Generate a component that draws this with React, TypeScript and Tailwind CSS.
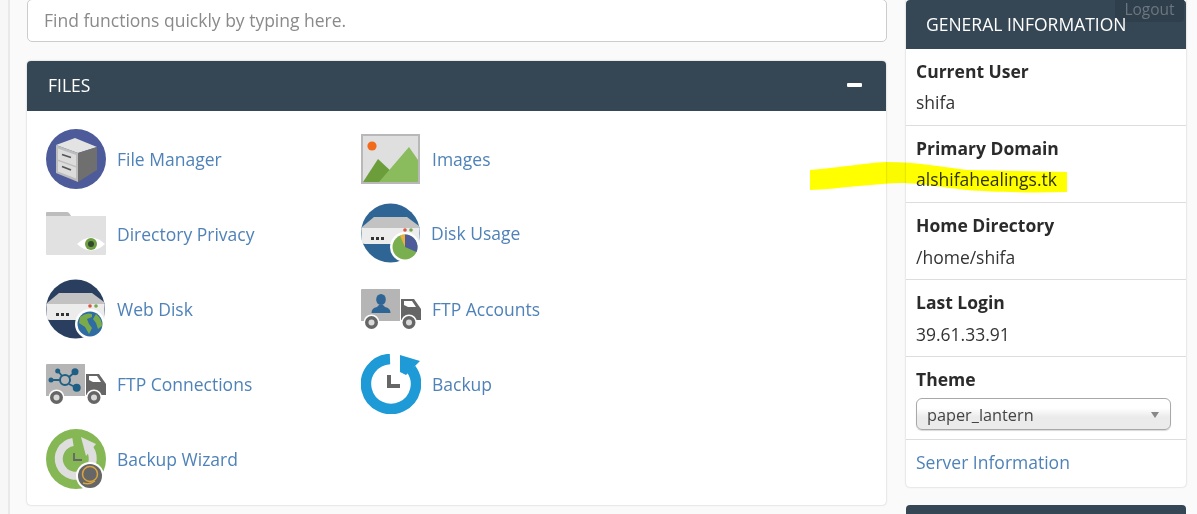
import React from "react";

const FileManagerIcon = () => (
  <svg width="60" height="60" viewBox="0 0 60 60">
    <circle cx="30" cy="30" r="30" fill="#4d5b9a" />
    <path d="M10 16 L29 9 L51 18 L32 24 Z" fill="#e3e3e3" />
    <path d="M32 24 L51 18 L51 41 L32 53 Z" fill="#6f6f6f" />
    <path d="M10 16 L32 24 L32 53 L10 44 Z" fill="#bdbdbd" />
    <path d="M12 19.5 L30 26 L30 37 L12 30.5 Z M12 32 L30 38.5 L30 49.5 L12 42.5 Z" fill="#dcdcdc" />
    <path d="M16 25.5 L25 28.5 M16 37.5 L25 41" stroke="#555" strokeWidth="1.8" />
  </svg>
);

const ImagesIcon = () => (
  <svg width="60" height="60" viewBox="0 0 60 60">
    <rect x="0" y="5" width="59" height="50" fill="#dfdfdf" />
    <rect x="1" y="6" width="57" height="48" fill="none" stroke="#b8b8b8" strokeWidth="2" />
    <circle cx="11" cy="17" r="4.6" fill="#f26b1d" />
    <path d="M2 53 L17 30 L33 45 L26 53 Z" fill="#6b9e3b" />
    <path d="M18 53 L48 18 L57 31 L57 53 Z" fill="#8abb5d" />
  </svg>
);

const FolderEyeIcon = () => (
  <svg width="60" height="60" viewBox="0 0 60 60">
    <path d="M0 12 V9 Q0 8 1 8 L21 8 Q23 8 25 12 Z" fill="#bdbdbd" />
    <path d="M0 12 H60 V50 Q60 51 59 51 H1 Q0 51 0 50 Z" fill="#e1e1e1" />
    <path d="M31 40 Q45 27 59 40 Q45 53 31 40 Z" fill="#fff" />
    <circle cx="45" cy="40" r="6" fill="#6f9e42" />
    <circle cx="45" cy="40" r="3" fill="#2f4a2f" />
  </svg>
);

const Server = ({ bg }: { bg: string }) => (
  <>
    <circle cx="29.5" cy="30" r="29.5" fill={bg} />
    <path d="M1 24 L13 14 L46 14 L58 23 L58 28 L1 28 Z" fill="#c2c2c2" />
    <path d="M0.5 25 H58.5 V38 Q58.5 41 56 41 H4 Q0.5 41 0.5 37 Z" fill="#ececec" />
    <rect x="10" y="34" width="3" height="3" fill="#333" />
    <rect x="15" y="34" width="3" height="3" fill="#333" />
    <rect x="20" y="34" width="3" height="3" fill="#333" />
    <circle cx="44" cy="27" r="1.8" fill="#d9573f" />
    <circle cx="50" cy="27" r="1.8" fill="#74a84a" />
  </>
);

const DiskUsageIcon = () => (
  <svg width="60" height="60" viewBox="0 0 60 60">
    <Server bg="#2f6594" />
    <circle cx="44" cy="44" r="15" fill="#fff" />
    <circle cx="44" cy="44" r="12.5" fill="#7aaf50" />
    <path d="M44 44 L44 31.5 A12.5 12.5 0 0 1 55.5 49 Z" fill="#4d5b9a" />
    <path d="M44 44 L44 31.5 A12.5 12.5 0 0 0 39 32.5 Z" fill="#eeb03d" />
  </svg>
);

const WebDiskIcon = () => (
  <svg width="60" height="60" viewBox="0 0 60 60">
    <Server bg="#2a3f5f" />
    <circle cx="44" cy="45" r="15" fill="#fff" />
    <circle cx="44" cy="45" r="12.5" fill="#2f6ca3" />
    <path d="M34 38 Q40 33 46 35 L46 38 L41 40 L43 45 L46 49 L43 55 L39 48 L33 44 Z" fill="#79ab4a" />
    <path d="M50 35 Q56 40 56 47 L52 50 L50 44 L47 40 Z" fill="#79ab4a" />
  </svg>
);

const Truck = ({ children }: { children?: React.ReactNode }) => (
  <>
    <path d="M0 5 Q0 4 1 4 H39 V36 H0 Z" fill="#b5b5b5" />
    <path d="M40 14 H53 L60 24 V35 H40 Z" fill="#666" />
    <path d="M43 16 H51 L55 22 H47 L43 20 Z" fill="#fff" />
    {children}
    <circle cx="10.5" cy="37.5" r="8" fill="#fff" />
    <circle cx="10.5" cy="37.5" r="6.5" fill="#666" />
    <circle cx="10.5" cy="37.5" r="3" fill="#d9d9d9" />
    <circle cx="48" cy="37.5" r="8" fill="#fff" />
    <circle cx="48" cy="37.5" r="6.5" fill="#666" />
    <circle cx="48" cy="37.5" r="3" fill="#d9d9d9" />
  </>
);

const FtpAccountsIcon = () => (
  <svg width="60" height="60" viewBox="0 0 60 60">
    <g transform="translate(0 6)">
      <Truck>
        <ellipse cx="20" cy="14.5" rx="4.8" ry="5.5" fill="#2f6594" />
        <path d="M10.5 28 Q10.5 23 16 22 L18 20 H22 L24 22 Q29.5 23 29.5 28 Z" fill="#2f6594" />
      </Truck>
    </g>
  </svg>
);

const FtpConnectionsIcon = () => (
  <svg width="60" height="60" viewBox="0 0 60 60">
    <g transform="translate(0 6)">
      <Truck>
        <g stroke="#1f5f85" strokeWidth="1.8" fill="none">
          <circle cx="19" cy="20" r="5" strokeWidth="2" />
          <path d="M14 20 H5 M16 16 L12 11 M23 17 L29 12 M23 24 L31 28" />
        </g>
        <circle cx="5" cy="20" r="2.5" fill="#1f5f85" />
        <circle cx="11.7" cy="11" r="2.5" fill="#1f5f85" />
        <circle cx="29" cy="11.7" r="3.5" fill="#1f5f85" />
        <circle cx="30.7" cy="27.7" r="4" fill="#1f5f85" />
      </Truck>
    </g>
  </svg>
);

const BackupIcon = () => (
  <svg width="60" height="60" viewBox="0 0 60 60">
    <path d="M29 5 A25 25 0 1 0 50 15" fill="none" stroke="#1e9ad6" strokeWidth="10.5" />
    <path d="M39 1 L59 7 L45 21 L39 18 Z" fill="#1e9ad6" />
    <path d="M28 21 V32 H39" fill="none" stroke="#666" strokeWidth="4" />
  </svg>
);

const BackupWizardIcon = () => (
  <svg width="60" height="60" viewBox="0 0 60 60">
    <circle cx="30" cy="30" r="30" fill="#85b755" />
    <path d="M27 13 A17 17 0 1 0 41 17" fill="none" stroke="#dedede" strokeWidth="8" />
    <path d="M35 8 L50 15 L40 27 Z" fill="#dedede" />
    <path d="M28 24 V31 H36" fill="none" stroke="#666" strokeWidth="1.8" />
    <circle cx="44" cy="47" r="14" fill="#fff" />
    <circle cx="44" cy="47" r="12" fill="#666" />
    <circle cx="44" cy="45" r="7.5" fill="none" stroke="#d9a441" strokeWidth="1.5" />
    <path d="M37 54 Q44 56 49 52" fill="none" stroke="#d9a441" strokeWidth="1.5" />
  </svg>
);

const tools: { name: string; icon: React.ReactNode; shift?: boolean }[] = [
  { name: "File Manager", icon: <FileManagerIcon /> },
  { name: "Images", icon: <ImagesIcon /> },
  { name: "Directory Privacy", icon: <FolderEyeIcon /> },
  { name: "Disk Usage", icon: <DiskUsageIcon />, shift: true },
  { name: "Web Disk", icon: <WebDiskIcon /> },
  { name: "FTP Accounts", icon: <FtpAccountsIcon /> },
  { name: "FTP Connections", icon: <FtpConnectionsIcon /> },
  { name: "Backup", icon: <BackupIcon /> },
  { name: "Backup Wizard", icon: <BackupWizardIcon /> },
];

const InfoRow = ({ label, value, low }: { label: string; value: string; low?: boolean }) => (
  <div className="h-[77px] border-b border-[#dddddd] px-[10px] pt-[9px]">
    <div className="text-[17.5px] leading-[26px] font-bold text-[#2b2b2b]">{label}</div>
    <div className={low ? "mt-[6px] text-[17.5px] leading-[26px] text-[#333333]" : "mt-[5px] text-[17.5px] leading-[26px] text-[#333333]"}>{value}</div>
  </div>
);

export default function App() {
  return (
    <div className="relative flex h-[514px] w-[1197px] overflow-hidden bg-[#fafafa] font-['Open_Sans',sans-serif]">
      <div className="h-full w-[10px] shrink-0 border-r-2 border-[#e9e9e9] bg-[#f7f7f7]" />

      <main className="ml-[17px] w-[860px] shrink-0">
        <div className="-mt-px flex h-[43px] w-[860px] items-center rounded-[5px] border border-[#cccccc] bg-white px-4 text-[17.5px] text-[#8a8a8a]">
          Find functions quickly by typing here.
        </div>

        <section className="mt-[19px] h-[444px] w-[859px] rounded-[4px] bg-white shadow-[0_0_2px_rgba(0,0,0,0.25)]">
          <header className="flex h-[50px] items-center justify-between rounded-t-[4px] bg-[#354655] pb-[2px] pl-[21px] pr-[24px] text-[17.5px] text-white">
            <span>FILES</span>
            <span className="h-[4px] w-[15px] rounded-[1px] bg-white" />
          </header>
          <div className="grid grid-cols-[315px_1fr] auto-rows-[75px] pl-[19px] pt-[18px]">
            {tools.map((t) => (
              <div key={t.name} className={t.shift ? "flex h-[60px] items-center gap-[10px] pb-[2px]" : "flex h-[60px] items-center gap-[11px]"}>
                <span className="h-[60px] w-[60px] shrink-0">{t.icon}</span>
                <span className="text-[17.5px] text-[#4f82b8]">{t.name}</span>
              </div>
            ))}
          </div>
        </section>
      </main>

      <aside className="ml-[19px] w-[280px] shrink-0">
        <section className="h-[487px] rounded-b-[4px] bg-white shadow-[0_0_2px_rgba(0,0,0,0.25)]">
          <header className="flex h-[49px] items-center rounded-t-[4px] bg-[#354655] pl-[20px] text-[17.5px] text-white">
            <span className="relative z-10">GENERAL INFORMATION</span>
          </header>
          <InfoRow label="Current User" value="shifa" />
          <InfoRow label="Primary Domain" value="alshifahealings.tk" />
          <InfoRow label="Home Directory" value="/home/shifa" low />
          <InfoRow label="Last Login" value="39.61.33.91" low />
          <div className="h-[83px] border-b border-[#dddddd] px-[10px] pt-[9px]">
            <div className="text-[17.5px] leading-[26px] font-bold text-[#2b2b2b]">Theme</div>
            <div className="mt-[6px] flex h-[32px] w-[255px] items-center justify-between rounded-[6px] border border-[#a8a8a8] bg-gradient-to-b from-white from-30% to-[#ebebeb] to-60% pl-[10px] pr-[11px] pt-[2px] text-[16.3px] text-[#444444] shadow-[0_1px_1px_rgba(0,0,0,0.15)]">
              <span>paper_lantern</span>
              <span className="h-0 w-0 border-x-[4px] border-t-[6px] border-x-transparent border-t-[#888888]" />
            </div>
          </div>
          <div className="px-[10px] pt-[9px] text-[17.5px] leading-[26px] text-[#4f82b8]">Server Information</div>
        </section>
        <div className="mt-[18px] h-[30px] rounded-t-[4px] bg-[#354655]" />
      </aside>

      <div className="absolute right-[13px] top-0 h-[22px] w-[69px] rounded-b-[4px] bg-[#303f4c] text-center text-[15.5px] leading-[18px] text-[#6a7680]">
        Logout
      </div>

      <svg className="pointer-events-none absolute left-[808px] top-[160px] mix-blend-multiply" width="264" height="36" viewBox="0 0 264 36">
        <path
          d="M2 10 C30 8 55 3 78 2 C110 2 135 7 159 10 L259 12 L259 32 C220 33 185 32 159 30 C130 27 115 23 92 23 C60 24 30 29 2 30 Z"
          fill="#ffff00"
        />
      </svg>
    </div>
  );
}
